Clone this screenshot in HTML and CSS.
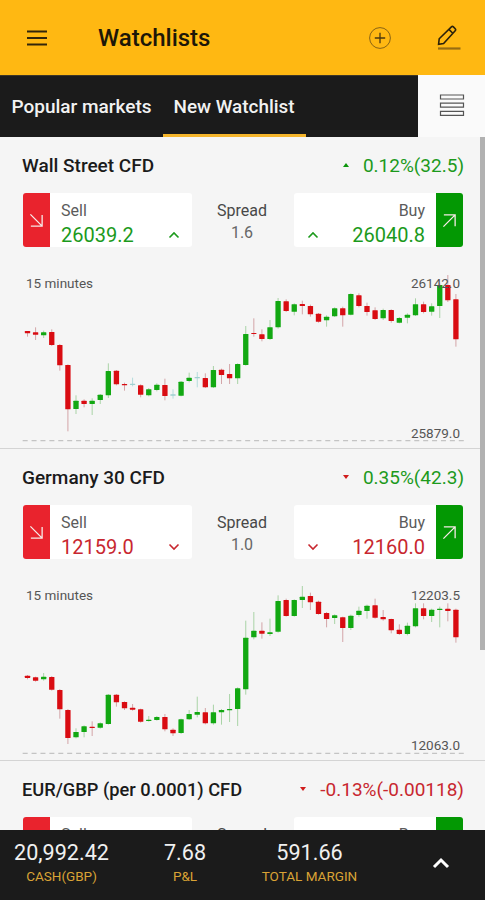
FILE: index.html
```html
<!DOCTYPE html>
<html lang="en">
  <head>
    <meta charset="UTF-8" />
    <meta name="viewport" content="width=device-width, initial-scale=1.0" />
    <title>Watchlists</title>
    <link rel="stylesheet" href="styles.css">
  </head>
  <body>
    <header>
      <svg class="menu-icon" viewBox="0 0 22 18">
        <path d="M1 2.5h20M1 9h20M1 15.5h20" />
      </svg>
      <h1>Watchlists</h1>
      <svg class="add-icon" viewBox="0 0 24 24">
        <circle cx="12" cy="12" r="10.4" />
        <path d="M12 6.8v10.4M6.8 12h10.4" />
      </svg>
      <svg class="edit-icon" viewBox="0 0 24 26">
        <path class="pencil" d="M1.6 19.2l.6-5.4L14.4 1.9q1-.9 2 0l1.8 1.9q.9 1 0 2L6.6 18.5zM11.9 4.4l3.9 3.9" />
        <path class="line" d="M1 23.5h22.5" />
      </svg>
    </header>

    <nav>
      <div class="tabs">
        <a class="tab">Popular markets</a>
        <a class="tab active">New Watchlist</a>
      </div>
      <div class="view-toggle">
        <svg viewBox="0 0 26 24">
          <path d="M1.5 2h23v4h-23zM1.5 10.2h23v4h-23zM1.5 18.4h23v4h-23z" />
        </svg>
      </div>
    </nav>

    <main>
      <section class="market">
        <div class="market-head">
          <h2>Wall Street CFD</h2>
          <span class="change green"><i class="tri up"></i>0.12%(32.5)</span>
        </div>
        <div class="prices">
          <div class="box sell">
            <div class="side"><svg viewBox="0 0 16 16"><path d="M1.5 1.5l12.5 12.5M14 2v12H2" /></svg></div>
            <div class="quote green">
              <span class="label">Sell</span>
              <div class="value"><b>26039.2</b><svg class="chev" viewBox="0 0 12 8"><path d="M1.5 6.5L6 2l4.5 4.5" /></svg></div>
            </div>
          </div>
          <div class="spread"><span>Spread</span><small>1.6</small></div>
          <div class="box buy">
            <div class="quote green">
              <span class="label">Buy</span>
              <div class="value"><svg class="chev" viewBox="0 0 12 8"><path d="M1.5 6.5L6 2l4.5 4.5" /></svg><b>26040.8</b></div>
            </div>
            <div class="side"><svg viewBox="0 0 16 16"><path d="M1.5 14.5L14 2M2 2h12v12" /></svg></div>
          </div>
        </div>
        <div class="chart">
          <svg id="wall-street" viewBox="0 0 1455 534"></svg>
          <span class="period">15 minutes</span>
          <span class="high">26142.0</span>
          <span class="low">25879.0</span>
        </div>
      </section>

      <section class="market">
        <div class="market-head">
          <h2>Germany 30 CFD</h2>
          <span class="change green"><i class="tri down"></i>0.35%(42.3)</span>
        </div>
        <div class="prices">
          <div class="box sell">
            <div class="side"><svg viewBox="0 0 16 16"><path d="M1.5 1.5l12.5 12.5M14 2v12H2" /></svg></div>
            <div class="quote red">
              <span class="label">Sell</span>
              <div class="value"><b>12159.0</b><svg class="chev" viewBox="0 0 12 8"><path d="M1.5 1.5L6 6l4.5-4.5" /></svg></div>
            </div>
          </div>
          <div class="spread"><span>Spread</span><small>1.0</small></div>
          <div class="box buy">
            <div class="quote red">
              <span class="label">Buy</span>
              <div class="value"><svg class="chev" viewBox="0 0 12 8"><path d="M1.5 1.5L6 6l4.5-4.5" /></svg><b>12160.0</b></div>
            </div>
            <div class="side"><svg viewBox="0 0 16 16"><path d="M1.5 14.5L14 2M2 2h12v12" /></svg></div>
          </div>
        </div>
        <div class="chart">
          <svg id="germany" viewBox="0 6 1455 534"></svg>
          <span class="period">15 minutes</span>
          <span class="high">12203.5</span>
          <span class="low">12063.0</span>
        </div>
      </section>

      <section class="market">
        <div class="market-head">
          <h2 class="long">EUR/GBP (per 0.0001) CFD</h2>
          <span class="change red"><i class="tri down"></i>-0.13%(-0.00118)</span>
        </div>
        <div class="prices">
          <div class="box sell">
            <div class="side"></div>
            <div class="quote"><span class="label">Sell</span></div>
          </div>
          <div class="spread"><span>Spread</span></div>
          <div class="box buy">
            <div class="quote"><span class="label">Buy</span></div>
            <div class="side"></div>
          </div>
        </div>
      </section>
      <div class="scrollbar"></div>
    </main>

    <footer>
      <div class="total cash"><span>20,992.42</span><small>CASH(GBP)</small></div>
      <div class="total pl"><span>7.68</span><small>P&amp;L</small></div>
      <div class="total margin"><span>591.66</span><small>TOTAL MARGIN</small></div>
      <svg class="expand" viewBox="0 0 18 12"><path d="M2 10l7-7 7 7" /></svg>
    </footer>
    <script src="charts.js"></script>
  </body>
</html>
```
FILE: styles.css
```css
* {
  box-sizing: border-box;
}

body {
  margin: 0;
  height: 900px;
  display: flex;
  flex-direction: column;
  overflow: hidden;
  font-family: Roboto, "Liberation Sans", sans-serif;
  background-color: #f5f5f5;
  color: #1b1b1b;
}

h1,
h2 {
  margin: 0;
  font-weight: 500;
}

svg {
  display: block;
  flex: none;
  fill: none;
}

/* ===== header ===== */
header {
  height: 75px;
  flex: none;
  display: flex;
  align-items: center;
  padding: 0 24px 0 26px;
  background-color: #ffb812;
}

header h1 {
  width: 270px;
  margin: 1px 0 0 50px;
  font-size: 24px;
  line-height: 30px;
  color: #1d1708;
}

.menu-icon {
  width: 22px;
  height: 18px;
  stroke: #33260a;
  stroke-width: 2.2;
}

.add-icon {
  width: 24px;
  height: 24px;
  stroke: #8a6414;
  stroke-width: 1;
}

.add-icon path {
  stroke: #4d390e;
  stroke-width: 1.3;
}

.edit-icon {
  width: 24px;
  height: 26px;
  margin-left: 45px;
}

.pencil {
  stroke: #2b210b;
  stroke-width: 1.6;
}

.line {
  stroke: #976c12;
  stroke-width: 2.2;
}

/* ===== tabs ===== */
nav {
  height: 62px;
  flex: none;
  display: flex;
}

.tabs {
  width: 418px;
  display: flex;
  background-color: #1b1b1b;
  border-top: 1px solid #3d3626;
}

.tab {
  width: 163px;
  padding: 18px 0 0 11.5px;
  font-size: 19px;
  line-height: 26px;
  font-weight: 500;
  color: #f2f2f2;
  white-space: nowrap;
}

.tab.active {
  width: 143px;
  padding-left: 10.5px;
  font-size: 18.9px;
  border-bottom: 3px solid #f5b52b;
}

.view-toggle {
  flex: 1;
  display: flex;
  justify-content: center;
  padding-top: 18px;
  background-color: #fafafa;
}

.view-toggle svg {
  width: 26px;
  height: 24px;
  stroke: #555;
  stroke-width: 1.2;
}

/* ===== markets ===== */
main {
  height: 693px;
  flex: none;
  position: relative;
  overflow: hidden;
}

.market {
  height: 312px;
  border-bottom: 1px solid #d4d4d4;
}

.market-head {
  display: flex;
  justify-content: space-between;
  align-items: center;
  height: 56px;
  padding: 0 21px 0 22px;
}

.market-head h2 {
  font-size: 19px;
}

.market-head .long {
  font-size: 18.25px;
}

.change {
  display: flex;
  align-items: center;
  font-size: 19px;
}

.green {
  color: #1c9a1c;
}

.red {
  color: #c8272f;
}

.tri {
  margin-right: 14px;
  border: 3.5px solid transparent;
}

.tri.up {
  border-top: 0;
  border-bottom: 4px solid #0a950a;
}

.tri.down {
  border-bottom: 0;
  border-top: 4px solid #d01c1c;
}

.prices {
  display: flex;
  justify-content: space-between;
  padding: 0 22px 0 23px;
}

.box {
  width: 169px;
  height: 54px;
  display: flex;
  background-color: #fff;
  border-radius: 3px;
  overflow: hidden;
}

.side {
  width: 27px;
  display: flex;
  align-items: center;
  justify-content: center;
  background-color: #e9232d;
}

.buy .side {
  background-color: #039803;
}

.side svg {
  width: 15px;
  height: 15px;
  stroke: #f6e9e6;
  stroke-width: 1.4;
}

.quote {
  flex: 1;
  padding: 7px 12px 0 11px;
}

.label {
  display: block;
  font-size: 16px;
  line-height: 22px;
  color: #5b5b5b;
}

.value {
  display: flex;
  justify-content: space-between;
  align-items: center;
  height: 26px;
}

.value b {
  font-size: 20px;
  font-weight: 400;
}

.chev {
  width: 12px;
  height: 8px;
  stroke: currentColor;
  stroke-width: 1.6;
}

.buy .quote {
  padding: 7px 11px 0 12.5px;
  text-align: right;
}

.spread {
  display: flex;
  flex-direction: column;
  align-items: center;
  padding: 7px 2px 0 0;
  font-size: 16px;
  line-height: 22px;
  color: #484848;
}

.spread small {
  font-size: 16px;
  color: #666;
}

/* ===== charts ===== */
.chart {
  position: relative;
  margin-top: 23px;
}

.chart svg {
  width: 485px;
  height: 178px;
  overflow: visible;
}

/* labels lie over the candles */
.period,
.high,
.low {
  position: absolute;
  font-size: 13.5px;
  line-height: 16px;
  color: #555;
}

.period {
  left: 26px;
  top: 5px;
}

.high {
  right: 25px;
  top: 5px;
}

.low {
  right: 25px;
  top: 155px;
}

.base {
  stroke: #c4c4c4;
  stroke-width: 4;
  stroke-dasharray: 15 11.7;
}

.wick {
  stroke-width: 3;
}

.wick-up {
  stroke: #a9d3a6;
}

.wick-down {
  stroke: #d3a5a8;
}

.wick-flat {
  stroke: #b4dcdc;
}

.body-up {
  fill: #12a812;
}

.body-down {
  fill: #d90c12;
}

.body-flat {
  fill: #9fd0d0;
}

.scrollbar {
  position: absolute;
  top: 0;
  right: 0;
  width: 5px;
  height: 513px;
  background-color: #b1b1b1;
}

/* ===== footer ===== */
footer {
  height: 70px;
  flex: none;
  display: flex;
  background-color: #1b1b1b;
}

.total {
  display: flex;
  flex-direction: column;
  align-items: center;
  padding-top: 9px;
}

.total span {
  font-size: 21.6px;
  line-height: 28px;
  color: #f0f0f0;
}

.total small {
  font-size: 13.5px;
  line-height: 18px;
  color: #d9a335;
}

.cash {
  width: 123px;
}

.pl {
  width: 124px;
}

.margin {
  width: 125px;
}

.expand {
  width: 18px;
  height: 12px;
  margin: 27px 0 0 60px;
  stroke: #fff;
  stroke-width: 3;
}
```
FILE: charts.js
```js
// each candle: direction (u/d/f), wick top, body top, body bottom, wick bottom
const wallStreet = `
d 183 183 190 200, d 172 187 194 210, u 182 187 196 204, d 178 186 225 228,
d 222 225 286 302, d 283 285 418 484, u 376 392 417 432, d 388 392 402 412,
u 385 392 402 435, u 372 374 390 402, u 280 303 376 384, d 300 302 343 346,
d 338 342 346 362, f 323 341 345 349, d 343 346 374 382, u 354 358 376 379,
u 340 344 360 364, d 326 345 378 391, f 358 373 377 386, u 333 335 377 379,
u 308 323 333 337, f 306 321 325 352, d 310 324 352 354, u 288 300 352 354,
d 296 299 315 342, d 282 312 325 342, u 280 282 325 342, u 168 192 285 287,
d 145 189 192 200, d 178 193 207 214, u 150 172 207 210, u 84 93 172 176,
d 88 94 123 126, u 100 103 125 136, d 92 102 108 133, d 104 108 133 140,
d 129 131 155 158, u 136 140 151 170, u 112 115 139 141, d 110 115 136 170,
u 70 72 134 136, d 70 76 108 112, d 98 108 126 137, d 112 121 147 150,
u 116 120 145 150, d 118 120 153 158, u 141 144 158 160, u 130 134 143 160,
u 85 103 136 138, d 95 103 126 130, u 100 109 125 137, u 40 45 108 144,
d 15 45 91 96, d 72 88 208 230`;

const germany = `
d 285 287 294 298, d 290 292 302 305, u 279 290 298 302, d 288 291 329 332,
d 327 330 388 416, d 387 390 474 492, u 445 456 472 475, u 436 439 456 472,
d 424 440 444 468, u 427 430 443 446, u 342 344 432 434, d 342 344 367 380,
d 364 366 385 390, d 372 383 389 392, d 386 388 425 428, u 408 419 423 425,
u 408 411 420 422, d 402 411 448 454, d 445 449 460 468, u 416 418 459 462,
u 390 402 418 420, u 350 396 404 412, d 384 397 430 433, u 374 397 430 434,
u 387 390 397 434, u 342 387 391 426, u 322 325 387 438, u 122 173 328 344,
u 96 152 172 178, d 127 152 161 176, u 116 157 162 168, u 46 63 155 158,
d 56 60 108 110, u 58 60 108 110, u 18 50 60 84, d 38 48 67 90,
d 62 65 102 104, d 96 99 117 142, u 103 106 114 132, d 110 112 144 186,
u 104 107 144 150, u 80 92 105 110, u 74 77 93 116, d 56 76 113 116,
d 90 111 118 122, d 116 117 151 160, d 133 149 162 165, u 128 137 162 166,
u 70 85 139 142, d 70 85 108 118, u 86 89 108 126, u 80 86 90 142,
d 70 86 93 124, d 86 89 172 188`;

const names = { u: "up", d: "down", f: "flat" };

function drawChart(id, data, baseY) {
  let out = `<path class="base" d="M68 ${baseY}H1392" />`;

  data.trim().split(",").forEach((item, i) => {
    const [dir, high, top, bottom, low] = item.trim().split(" ");
    const x = 82.5 + i * 24.25;
    const name = names[dir];
    out += `<path class="wick wick-${name}" d="M${x} ${high}V${low}" />`;
    out += `<rect class="body-${name}" x="${x - 8}" y="${top}" width="16" height="${bottom - top}" rx="1.5" />`;
  });

  document.getElementById(id).innerHTML = out;
}

drawChart("wall-street", wallStreet, 512);
drawChart("germany", germany, 520);
```
